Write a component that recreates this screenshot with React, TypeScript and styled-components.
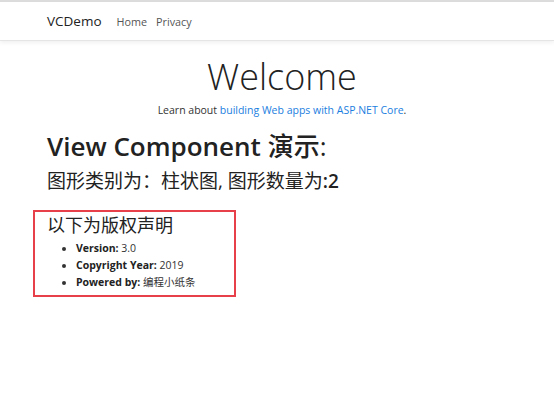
import React from "react";
import styled, { createGlobalStyle } from "styled-components";

const Global = createGlobalStyle`
  html, body { margin: 0; padding: 0; background: #fff; }
  body { font-family: "Open Sans", "Noto Sans", "Noto Sans CJK SC", sans-serif; color: #212529; }
`;

const Page = styled.div`
  width: 554px;
  min-height: 393px;
  border-top: 2px solid #dcdcdc;
  box-sizing: border-box;
`;

const Navbar = styled.nav`
  height: 38px;
  display: flex;
  align-items: center;
  padding-left: 47px;
  border-bottom: 1px solid #e5e5e5;
  box-shadow: 0 2px 4px rgba(0, 0, 0, 0.06);
  margin-bottom: 10px;
`;

const Brand = styled.a`
  font-size: 13.5px;
  color: #222;
  margin-right: 15px;
  text-decoration: none;
`;

const NavLink = styled.a`
  font-size: 10.8px;
  color: #555;
  margin-right: 9px;
  text-decoration: none;
`;

const Main = styled.main`
  padding: 0 37px 0 47px;
`;

const Center = styled.div`
  text-align: center;
`;

const Title = styled.h1`
  font-size: 36px;
  font-weight: 300;
  margin: 0;
  line-height: 52px;
  color: #222;
`;

const Lead = styled.p`
  font-size: 10.5px;
  margin: 0 0 10px;
  color: #333;
  a { color: #1b7ee0; text-decoration: none; }
`;

const H2 = styled.h2`
  font-family: "Open Sans", "Noto Sans CJK SC", sans-serif;
  font-size: 26px;
  font-weight: 600;
  margin: 0;
  line-height: 38px;
  color: #222;
`;

const Cjk = styled.span`
  font-weight: 500;
`;

const H3 = styled.h3`
  font-family: "Open Sans", "Noto Sans CJK SC", sans-serif;
  font-size: 19px;
  font-weight: 400;
  margin: 0;
  line-height: 32px;
  color: #222;
`;

const Num = styled.b`
  font-weight: 600;
`;

const Notice = styled.div`
  margin: 13px 0 0 -14px;
  width: 203px;
  height: 87px;
  border: 2px solid #e8404a;
  box-sizing: border-box;
  padding: 0 0 0 12px;
`;

const NoticeTitle = styled.h4`
  font-family: "Open Sans", "Noto Sans CJK SC", sans-serif;
  font-size: 18px;
  font-weight: 400;
  margin: 0;
  line-height: 26px;
  color: #222;
`;

const List = styled.ul`
  margin: 2px 0 0;
  padding-left: 29px;
  font-size: 10.5px;
  line-height: 17px;
  color: #333;
`;

const Label = styled.strong`
  font-weight: 700;
  color: #222;
`;

export default function App() {
  return (
    <Page>
      <Global />
      <Navbar>
        <Brand>VCDemo</Brand>
        <NavLink>Home</NavLink>
        <NavLink>Privacy</NavLink>
      </Navbar>
      <Main>
        <Center>
          <Title>Welcome</Title>
          <Lead>
            Learn about <a href="#">building Web apps with ASP.NET Core</a>.
          </Lead>
        </Center>
        <H2>
          View Component <Cjk>演示:</Cjk>
        </H2>
        <H3>
          图形类别为：柱状图, 图形数量为<Num>:2</Num>
        </H3>
        <Notice>
          <NoticeTitle>以下为版权声明</NoticeTitle>
          <List>
            <li><Label>Version:</Label> 3.0</li>
            <li><Label>Copyright Year:</Label> 2019</li>
            <li><Label>Powered by:</Label> 编程小纸条</li>
          </List>
        </Notice>
      </Main>
    </Page>
  );
}
